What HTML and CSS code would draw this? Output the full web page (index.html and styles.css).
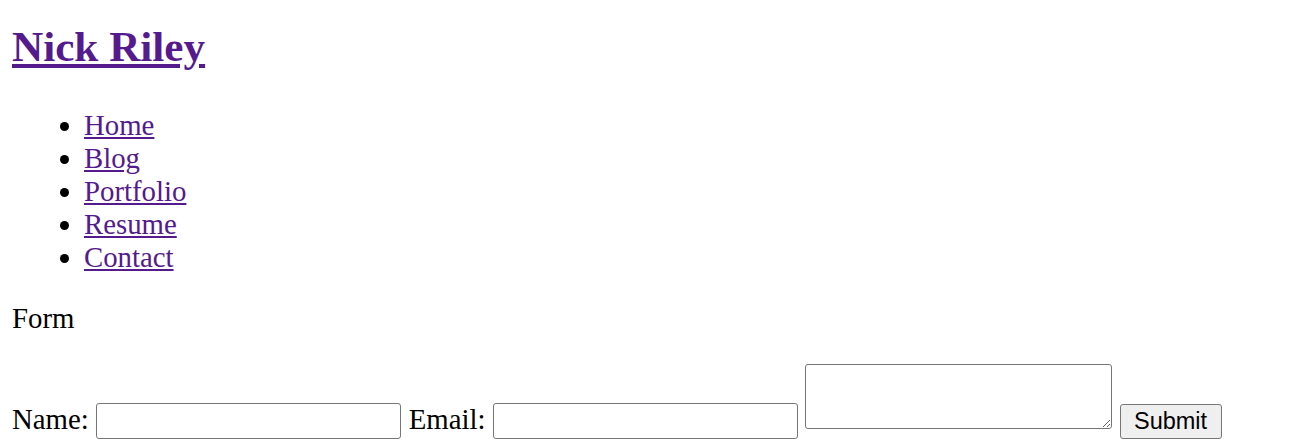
FILE: index.html
```html
<!DOCTYPE html>
<html lang="en">
<head>
<meta charset="utf-8">
<title>Nick Riley</title>
<link rel="stylesheet" href="styles.css">
</head>
<body>
<header class="site-header">
  <h1 class="site-title"><a href="#">Nick Riley</a></h1>
  <nav>
    <ul class="nav-list">
      <li><a href="#">Home</a></li>
      <li><a href="#">Blog</a></li>
      <li><a href="#">Portfolio</a></li>
      <li><a href="#">Resume</a></li>
      <li><a href="#">Contact</a></li>
    </ul>
  </nav>
</header>
<main>
  <p class="form-title">Form</p>
  <form class="contact-form">
    <label>Name: <input type="text" class="field"></label>
    <label>Email: <input type="email" class="field"></label>
    <textarea class="message"></textarea>
    <button type="submit" class="submit">Submit</button>
  </form>
</main>
</body>
</html>
```

FILE: styles.css
```css
body {
  margin: 0 12px 12px;
  font-family: "Liberation Serif", "Times New Roman", serif;
  font-size: 28.8px;
  color: #000;
  background: #fff;
}

a {
  color: #551a8b;
}

.site-title {
  font-size: 43.2px;
  font-weight: bold;
  margin: 21.6px 0 38px;
}

.nav-list {
  margin: 0 0 28.8px;
  padding-left: 72px;
}

.form-title {
  margin: 0 0 28.8px;
}

.contact-form {
  margin: 0;
}

.field {
  box-sizing: border-box;
  width: 305.5px;
  height: 36px;
  padding: 1px 4px;
  margin: 0;
  border: 1px solid #767676;
  border-radius: 3px;
  font-family: "Liberation Sans", Arial, sans-serif;
  font-size: 24px;
  background: #fff;
}

.message {
  box-sizing: border-box;
  width: 307px;
  height: 65px;
  margin: 0;
  padding: 2px;
  border: 1px solid #767676;
  border-radius: 3px;
  font-family: "Liberation Mono", monospace;
  font-size: 24px;
  background: #fff;
}

.submit {
  box-sizing: border-box;
  width: 102px;
  height: 35px;
  margin: 0;
  padding: 0;
  border: 1px solid #767676;
  border-radius: 3px;
  background: #efefef;
  color: #000;
  font-family: "Liberation Sans", Arial, sans-serif;
  font-size: 23.5px;
}
```
